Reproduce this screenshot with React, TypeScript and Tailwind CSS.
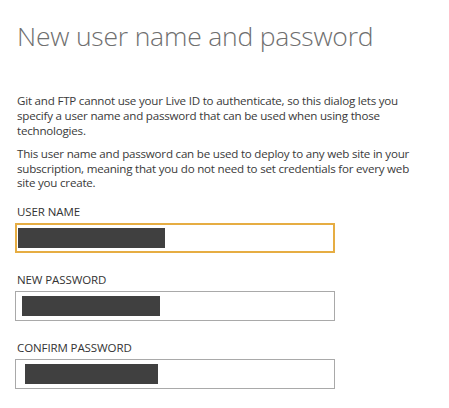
export default function App() {
  const fields = [
    { label: "USER NAME", focused: true, mask: "ml-[1px] w-[147px]" },
    { label: "NEW PASSWORD", focused: false, mask: "ml-[5px] w-[138px]" },
    { label: "CONFIRM PASSWORD", focused: false, mask: "ml-[8px] w-[133px]" },
  ];

  return (
    <div className="w-[449px] h-[408px] bg-white pl-[17px] pr-[10px] font-['Open_Sans',sans-serif] text-[#3a3a3a] overflow-hidden">
      <h1 className="pt-[18px] text-[26.5px] leading-[36px] font-light text-[#6f6f6f] tracking-[-0.2px]">
        New user name and password
      </h1>

      <p className="mt-[39px] text-[11.6px] leading-[15px] tracking-[-0.22px]">
        Git and FTP cannot use your Live ID to authenticate, so this dialog lets you
        <br />
        specify a user name and password that can be used when using those
        <br />
        technologies.
      </p>
      <p className="mt-[9px] text-[11.6px] leading-[14.6px] tracking-[-0.22px]">
        This user name and password can be used to deploy to any web site in your
        <br />
        subscription, meaning that you do not need to set credentials for every web
        <br />
        site you create.
      </p>

      <div className="mt-[13px]">
        {fields.map((f, i) => (
          <div key={f.label} className={i > 0 ? "mt-[19px]" : ""}>
            <label className="block text-[11.5px] leading-[15px] text-[#333] tracking-[-0.1px]">
              {f.label}
            </label>
            <div
              className={
                "mt-[4px] -ml-[2px] w-[320px] h-[30px] flex items-center bg-white " +
                (f.focused
                  ? "border-2 border-[#e6ad43]"
                  : "border border-[#a9a9a9] pl-px")
              }
            >
              <div className={"h-[20px] bg-[#404040] " + f.mask} />
            </div>
          </div>
        ))}
      </div>
    </div>
  );
}
